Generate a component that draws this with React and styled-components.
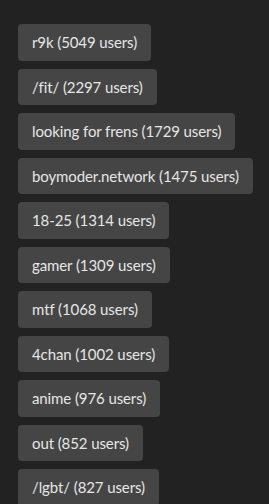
import React from 'react';
import styled, { createGlobalStyle } from 'styled-components';

const GlobalStyle = createGlobalStyle`
    html, body {
        margin: 0;
        padding: 0;
        background: #222222;
    }
`;

const Page = styled.div`
    padding: 24px 18px;
    font-family: Lato, "Noto Sans", sans-serif;
`;

const TagList = styled.div`
    display: flex;
    flex-direction: column;
    align-items: flex-start;
    gap: 8px;
`;

const TagButton = styled.button`
    border: none;
    background: #454545;
    color: #e6e6e6;
    font-family: inherit;
    font-size: 15px;
    line-height: 18px;
    padding: 9.25px 14px;
    border-radius: 4px;
    white-space: nowrap;
    letter-spacing: -0.1px;
    cursor: pointer;
`;

const tags = [
    ['r9k', 5049],
    ['/fit/', 2297],
    ['looking for frens', 1729],
    ['boymoder.network', 1475],
    ['18-25', 1314],
    ['gamer', 1309],
    ['mtf', 1068],
    ['4chan', 1002],
    ['anime', 976],
    ['out', 852],
    ['/lgbt/', 827],
];

export default function App() {
    return (
        <Page>
            <GlobalStyle />
            <TagList>
                {tags.map(([name, count]) => (
                    <TagButton key={name}>
                        {name} ({count} users)
                    </TagButton>
                ))}
            </TagList>
        </Page>
    );
}
